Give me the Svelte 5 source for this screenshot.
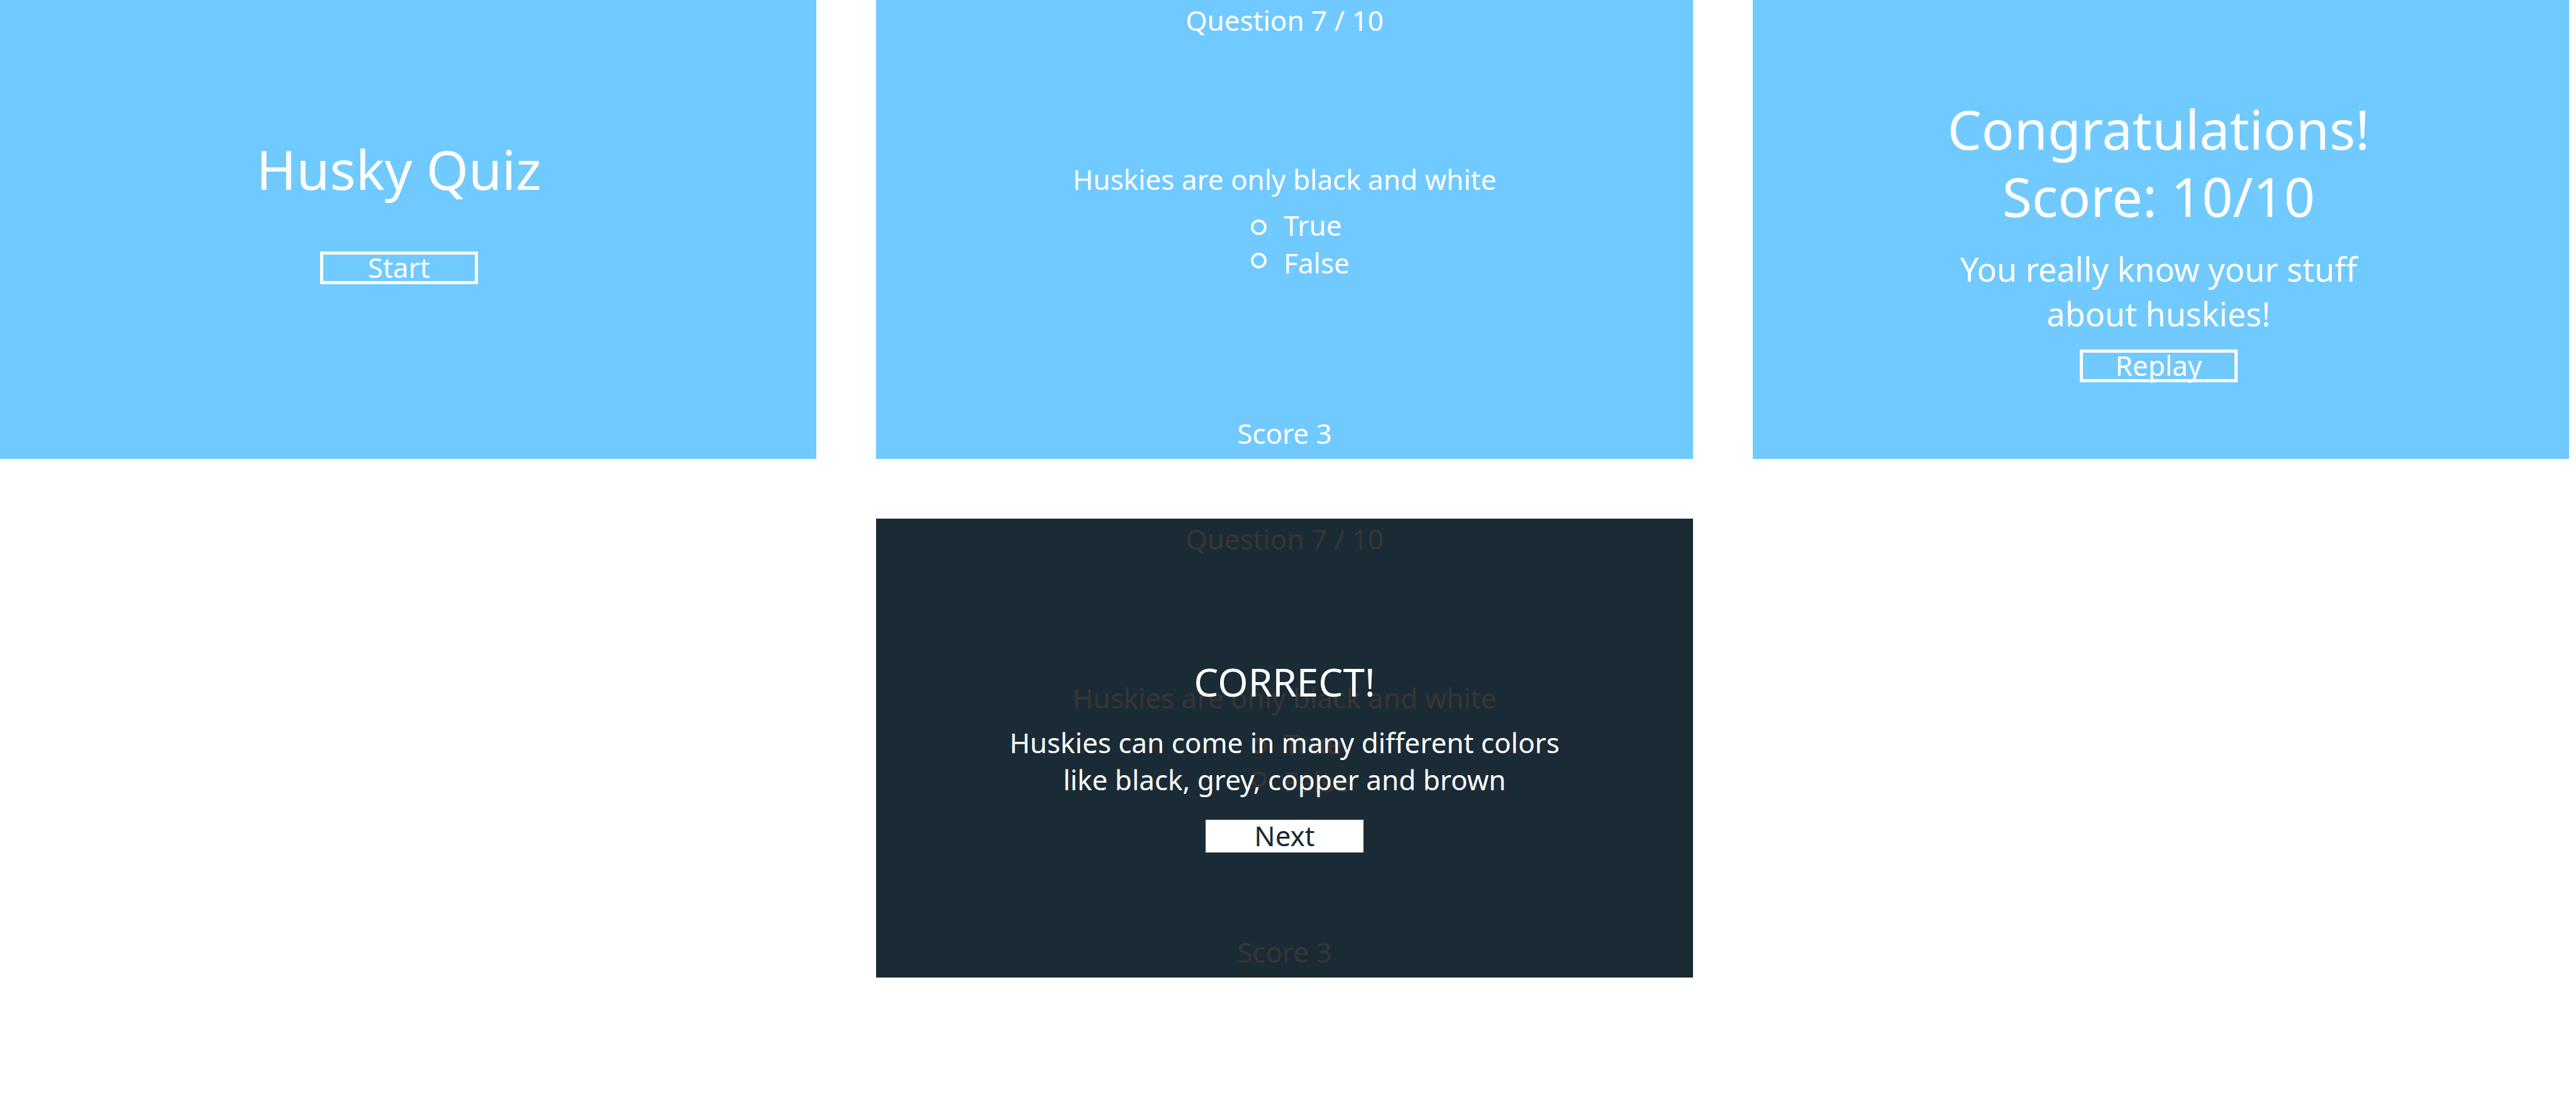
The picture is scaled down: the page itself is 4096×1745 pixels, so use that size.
<script>
  const uid = $props.id();
  const answers = ['True', 'False'];
  let picked = $state({ live: '', under: '' });
</script>

{#snippet question(name)}
  <header class="body-text">Question 7 / 10</header>
  <form class="quiz">
    <p class="body-text" id="{uid}-{name}">Huskies are only black and white</p>
    <div class="answers" role="radiogroup" aria-labelledby="{uid}-{name}">
      <div class="radios">
        {#each answers as answer}
          <input type="radio" id="{uid}-{name}-{answer}" name={name} value={answer} bind:group={picked[name]} />
        {/each}
      </div>
      <div class="labels">
        {#each answers as answer}
          <label class="body-text" for="{uid}-{name}-{answer}">{answer}</label>
        {/each}
      </div>
    </div>
  </form>
  <footer class="body-text">Score 3</footer>
{/snippet}

<main>
  <section class="screen start">
    <h1>Husky Quiz</h1>
    <button type="button">Start</button>
  </section>

  <section class="screen asking">
    {@render question('live')}
  </section>

  <section class="screen result">
    <h1>Congratulations!<br />Score: 10/10</h1>
    <p>You really know your stuff<br />about huskies!</p>
    <button type="button">Replay</button>
  </section>

  <section class="screen asking dimmed">
    {@render question('under')}
    <div class="feedback">
      <h2>CORRECT!</h2>
      <p class="body-text">Huskies can come in many different colors<br />like black, grey, copper and brown</p>
      <button type="button" class="solid">Next</button>
    </div>
  </section>
</main>

<style>
  :global(body) {
    margin: 0;
    background: #fff;
  }

  main {
    display: grid;
    grid-template-columns: repeat(3, 1fr);
    gap: 95px;
    padding-right: 11px;
    font-family: 'Noto Sans', 'Open Sans', sans-serif;
    color: #fff;
  }

  h1,
  h2,
  p {
    margin: 0;
    font-weight: 400;
    text-align: center;
  }

  h1 {
    font-size: 86px;
    line-height: 107px;
  }

  h2 {
    font-size: 62px;
    line-height: 84px;
  }

  .body-text {
    font-size: 44px;
    line-height: 60px;
  }

  .screen {
    display: flex;
    flex-direction: column;
    align-items: center;
    box-sizing: border-box;
    aspect-ratio: 1366 / 768;
    background: #70caff;
  }

  button {
    box-sizing: border-box;
    display: flex;
    align-items: center;
    justify-content: center;
    width: 251px;
    height: 52px;
    padding: 0 0 2px;
    border: 5px solid #fff;
    border-radius: 0;
    background: transparent;
    color: inherit;
    font: inherit;
    font-size: 44px;
    line-height: 52px;
    cursor: pointer;
  }

  button.solid {
    background: #fff;
    color: #1a2b36;
  }

  .start {
    padding: 215px 30px 0 0;
    gap: 78px;
  }

  .asking {
    padding: 2px 0 11px;
    justify-content: space-between;
  }

  .quiz {
    display: flex;
    flex-direction: column;
    align-items: center;
    gap: 13px;
    /* keeps the question above the middle of the screen */
    padding-bottom: 18px;
  }

  .answers {
    display: flex;
    align-items: center;
    gap: 27px;
    padding-left: 50px;
  }

  .radios {
    display: flex;
    flex-direction: column;
    gap: 28px;
  }

  input {
    appearance: none;
    box-sizing: border-box;
    width: 25px;
    height: 25px;
    margin: 0;
    border: 4px solid currentColor;
    border-radius: 50%;
    color: inherit;
    cursor: pointer;
  }

  input:checked {
    background: currentColor;
  }

  .labels {
    display: flex;
    flex-direction: column;
  }

  .result {
    padding: 151px 7px 0 0;
  }

  .result p {
    margin: 27px 0 22px;
    font-size: 52px;
    line-height: 71px;
  }

  .dimmed {
    position: relative;
    grid-column: 2;
    background: #1a2b36;
    color: #383533;
  }

  .feedback {
    position: absolute;
    inset: 0;
    display: flex;
    flex-direction: column;
    align-items: center;
    padding-top: 217px;
    color: #fff;
  }

  .feedback p {
    margin: 26px 0 34px;
    line-height: 59px;
  }
</style>
